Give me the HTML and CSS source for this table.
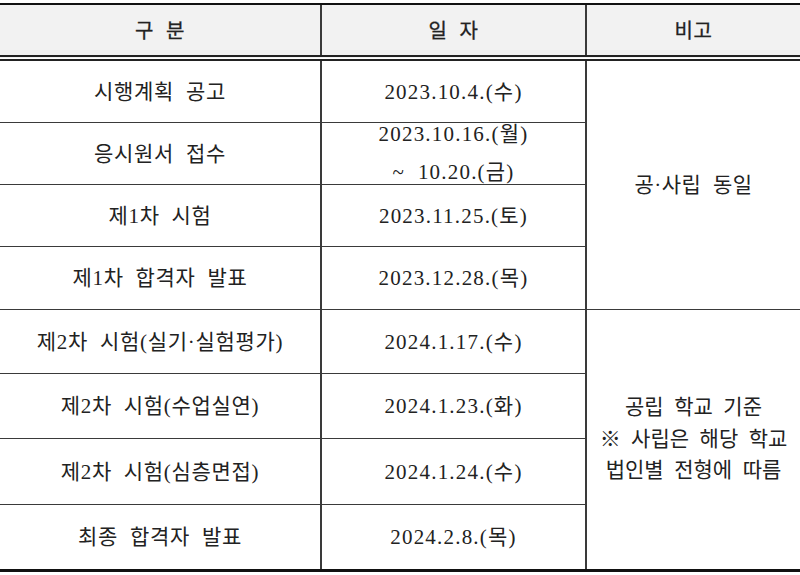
FILE: index.html
```html
<!DOCTYPE html>
<html lang="ko">
<head>
<meta charset="utf-8">
<link rel="stylesheet" href="styles.css">
</head>
<body>
<table class="sched">
  <colgroup>
    <col class="c1"><col class="c2"><col class="c3">
  </colgroup>
  <thead>
    <tr class="head"><th>구&nbsp;&nbsp;분</th><th>일&nbsp;&nbsp;자</th><th>비고</th></tr>
  </thead>
  <tbody>
    <tr class="r1"><td>시행계획&nbsp; 공고</td><td class="date">2023.10.4.(수)</td><td rowspan="4" class="note">공·사립&nbsp; 동일</td></tr>
    <tr class="r2"><td>응시원서&nbsp; 접수</td><td class="date"><div class="two">2023.10.16.(월)<br>~&nbsp; 10.20.(금)</div></td></tr>
    <tr class="r3"><td>제1차&nbsp; 시험</td><td class="date">2023.11.25.(토)</td></tr>
    <tr class="r4"><td>제1차&nbsp; 합격자&nbsp; 발표</td><td class="date">2023.12.28.(목)</td></tr>
    <tr class="r5"><td>제2차&nbsp; 시험(실기·실험평가)</td><td class="date">2024.1.17.(수)</td><td rowspan="4" class="note multi">공립&nbsp; 학교&nbsp; 기준<br>※&nbsp; 사립은&nbsp; 해당&nbsp; 학교<br>법인별&nbsp; 전형에&nbsp; 따름</td></tr>
    <tr class="r6"><td>제2차&nbsp; 시험(수업실연)</td><td class="date">2024.1.23.(화)</td></tr>
    <tr class="r7"><td>제2차&nbsp; 시험(심층면접)</td><td class="date">2024.1.24.(수)</td></tr>
    <tr class="r8"><td>최종&nbsp; 합격자&nbsp; 발표</td><td class="date">2024.2.8.(목)</td></tr>
  </tbody>
</table>
</body>
</html>
```

FILE: styles.css
```css
html, body {
  margin: 0;
  padding: 0;
  background: #ffffff;
}
body {
  padding-top: 3px;
  font-family: "Liberation Serif", "Noto Sans CJK KR", serif;
  color: #222222;
}
.sched {
  width: 800px;
  border-collapse: collapse;
  table-layout: fixed;
  font-size: 21px;
}
.c1 { width: 321px; }
.c2 { width: 265px; }
.c3 { width: 214px; }
.sched th, .sched td {
  padding: 0;
  text-align: center;
  vertical-align: middle;
  border-left: 2px solid #3a3a3a;
  border-top: 1px solid #3a3a3a;
  line-height: 28px;
  white-space: nowrap;
  letter-spacing: 0.7px;
}
.sched th:first-child, .sched td:first-child { border-left: none; }
.head th {
  background: #f2f2f2;
  height: 50px;
  font-weight: normal;
  border-top: 2px solid #111111;
  border-bottom: 6px double #222222;
  font-family: "Noto Sans CJK KR", sans-serif;
  font-size: 20px;
  letter-spacing: 0.5px;
  -webkit-text-stroke: 0.3px #222;
}
.sched td.date { letter-spacing: 1.2px; }
.r1 td { border-top: none; height: 61px; }
.r2 td { height: 60px; }
.r3 td { height: 61px; }
.r4 td { height: 62px; }
.r5 td { height: 63px; }
.r6 td { height: 64px; }
.r7 td { height: 65px; }
.r8 td { height: 64px; border-bottom: 3px solid #111111; }
.sched td.note { border-bottom: none; letter-spacing: 0.5px; }
.sched .r5 td.note { border-bottom: 3px solid #111111; }
.two {
  line-height: 38px;
  margin: -8px 0 -7px;
}
.sched td.multi { line-height: 31.5px; letter-spacing: 0; }
```
